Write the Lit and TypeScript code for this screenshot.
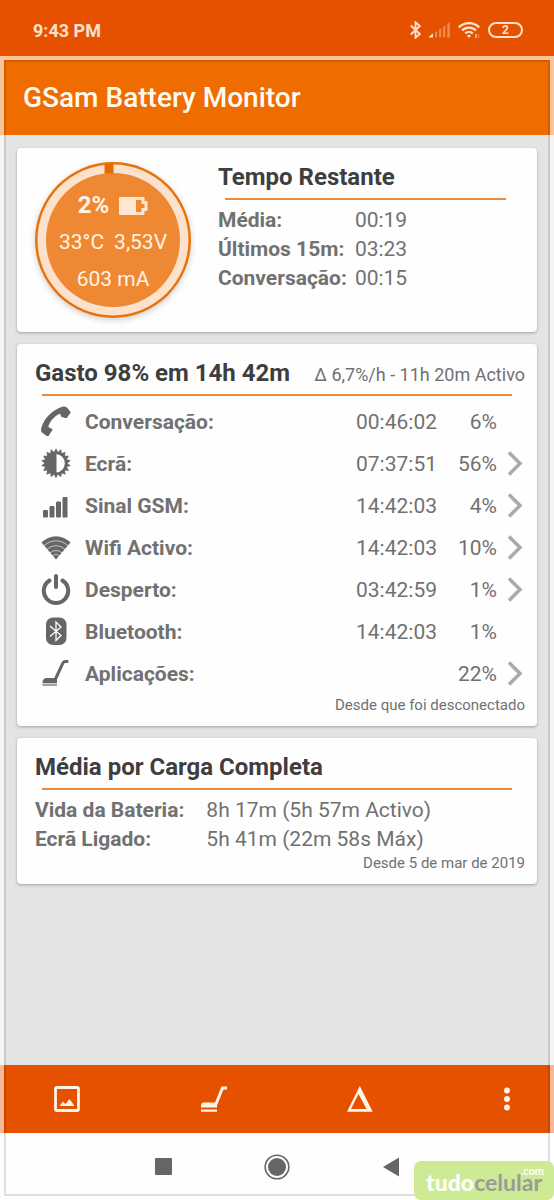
import { LitElement, html, svg, css, nothing } from "lit";
import { customElement, property } from "lit/decorators.js";

const usageIcons: Record<string, unknown> = {
  phone: svg`<path d="M22 .6Q25 0 26.500 2L29.800 6.500 25.500 12.300 20.500 11 19 7.800C14 9.500 8.500 15.500 7.300 20.800L11.800 23.500 7.500 30 5.500 30 .8 26.300Q-.3 25 .3 22C3 12.500 11 4 22 .6Z"/>`,
  screen: svg`<path fill-rule="evenodd" d="${burst()}M15.500 6v18.500a9.300 9.300 0 0 0 0-18.500Z"/>`,
  signal: svg`<rect x="2" y="20" width="5" height="7.500" rx="1"/><rect x="8.500" y="16" width="5" height="11.500" rx="1"/><rect x="15" y="11.500" width="5" height="16" rx="1"/><rect x="21.500" y="7" width="5" height="20.500" rx="1"/>`,
  wifi: svg`<path d="M.500 10.500A20 20 0 0 1 29.500 10.500L15 27.500Z"/><g fill="none" stroke="#fff" stroke-width=".8" opacity=".8"><path d="M3 13.800a17 17 0 0 1 24 0M6 17.300a13 13 0 0 1 18 0M9 20.800a9 9 0 0 1 12 0M11.500 24a5 5 0 0 1 7 0"/></g>`,
  power: svg`<g fill="none" stroke="currentColor" stroke-width="4" stroke-linecap="round"><path d="M8.500 6.500a12.200 12.200 0 1 0 13 0"/><path d="M15 2v11"/></g>`,
  bluetooth: svg`<rect x="5" y="1.500" width="20.500" height="27.500" rx="7"/><path d="m9 10 11 9.500-5 5V6l5 5-11 9.500" fill="none" stroke="#fff" stroke-width="1.300"/>`,
  apps: svg`<path d="M27.300 3.500H24q-1.500 0-2.300 2L14 22" fill="none" stroke="currentColor" stroke-width="3"/><path d="M1.500 25c0-4 2-5 5-5h9.500v5Z"/><path d="M1.500 25.500h14.500v2.500h-14.500Z" opacity=".6"/>`,
};

function burst(): string {
  const teeth = 18;
  let path = "";
  for (let i = 0; i < teeth * 2; i++) {
    const radius = i % 2 ? 11.5 : 15;
    const angle = (Math.PI * i) / teeth;
    const x = (15 + radius * Math.sin(angle)).toFixed(1);
    const y = (15.2 - radius * Math.cos(angle)).toFixed(1);
    path += `${i ? "L" : "M"}${x} ${y}`;
  }
  return path + "Z";
}

interface Usage {
  icon: string;
  label: string;
  time: string;
  share: string;
  details: boolean;
}

const usage: Usage[] = [
  { icon: "phone", label: "Conversação:", time: "00:46:02", share: "6%", details: false },
  { icon: "screen", label: "Ecrã:", time: "07:37:51", share: "56%", details: true },
  { icon: "signal", label: "Sinal GSM:", time: "14:42:03", share: "4%", details: true },
  { icon: "wifi", label: "Wifi Activo:", time: "14:42:03", share: "10%", details: true },
  { icon: "power", label: "Desperto:", time: "03:42:59", share: "1%", details: true },
  { icon: "bluetooth", label: "Bluetooth:", time: "14:42:03", share: "1%", details: false },
  { icon: "apps", label: "Aplicações:", time: "", share: "22%", details: true },
];

@customElement("status-bar")
export class StatusBar extends LitElement {
  static styles = css`
    :host {
      display: flex;
      align-items: center;
      justify-content: space-between;
      box-sizing: border-box;
      height: 56px;
      padding: 4px 31px 0 33px;
      background: #e65100;
      color: #fce0cf;
      font-size: 18px;
      font-weight: 700;
    }
    .icons {
      display: flex;
      align-items: center;
      gap: 8px;
    }
    svg {
      display: block;
    }
    .battery {
      box-sizing: border-box;
      width: 35px;
      height: 16px;
      border: 2px solid currentColor;
      border-radius: 8px;
      font-size: 12px;
      font-weight: 700;
      line-height: 12px;
      text-align: center;
    }
  `;
  render() {
    return html`
      <span>9:43 PM</span>
      <span class="icons">
        <svg width="11" height="18" viewBox="0 0 11 18" fill="none" stroke="currentColor" stroke-width="1.900">
          <path d="m.800 4.500 9 8.500-4.300 3.700V1.300L9.800 5l-9 8.500" />
        </svg>
        <svg width="21" height="16" viewBox="0 0 21 16" fill="currentColor">
          <path d="M0 15.500 0 14.500 4 11.500v4Z" />
          <g opacity=".4">
            <path d="M6 10.500l2-1.500v6.500H6ZM10 7.500 12.200 6v9.500H10ZM14 5l2.300-1.500v12H14ZM18.300 2 20.800 0v15.500h-2.500Z" />
          </g>
        </svg>
        <svg width="22" height="18" viewBox="0 0 22 18" fill="none" stroke="currentColor" stroke-width="2.400">
          <path d="M.800 6.300a14.500 14.500 0 0 1 20.400 0M4 9.500a10 10 0 0 1 14 0M7.200 12.500a5.500 5.500 0 0 1 7.600 0" />
          <path d="m11 17-2-2.300a3 3 0 0 1 4 0Z" fill="currentColor" stroke="none" />
          <path d="M18 13v4" stroke-width="1.200" />
          <path d="M20.500 13v4" stroke-width="1.200" opacity=".4" />
        </svg>
        <span class="battery">2</span>
      </span>
    `;
  }
}

@customElement("info-card")
export class InfoCard extends LitElement {
  @property() heading = "";
  @property() note = "";
  @property() footer = "";
  static styles = css`
    :host {
      display: block;
      min-width: 0;
    }
    header {
      display: flex;
      align-items: baseline;
      justify-content: space-between;
      white-space: nowrap;
    }
    h2 {
      margin: 0;
      color: #3e3e3e;
      font-size: 24px;
      font-weight: 700;
      line-height: 30px;
    }
    .note {
      font-size: 18px;
      line-height: 24px;
    }
    .rule {
      height: 2px;
      margin: 6px 13px 5px 7px;
      background: #e98a3c;
    }
    .footer {
      margin: 0;
      font-size: 15px;
      line-height: 21px;
      text-align: right;
    }
  `;
  render() {
    return html`
      <header>
        <h2>${this.heading}</h2>
        ${this.note ? html`<span class="note">${this.note}</span>` : nothing}
      </header>
      <div class="rule"></div>
      <slot></slot>
      ${this.footer ? html`<p class="footer">${this.footer}</p>` : nothing}
    `;
  }
}

@customElement("battery-dial")
export class BatteryDial extends LitElement {
  static styles = css`
    :host {
      display: grid;
      flex: none;
      width: 156px;
      height: 156px;
      border-radius: 50%;
      box-shadow: 0 2px 6px rgba(0, 0, 0, 0.2);
      color: #fff4e6;
      font-size: 21px;
    }
    .ring,
    .readings {
      grid-area: 1 / 1;
    }
    .readings {
      display: flex;
      flex-direction: column;
      align-items: center;
      padding-top: 25px;
      line-height: 37px;
    }
    .line {
      display: flex;
      align-items: center;
      gap: 10px;
    }
    .line b {
      font-size: 24px;
    }
  `;
  render() {
    return html`
      <svg class="ring" width="156" height="156" viewBox="0 0 156 156">
        <circle cx="78" cy="78" r="78" fill="#e8710a" />
        <circle cx="78" cy="78" r="75.500" fill="#fce2cd" />
        <circle cx="78" cy="78" r="67" fill="#ef8832" />
        <path d="M69.500 2h9v9.500h-9Z" fill="#e66a00" />
      </svg>
      <div class="readings">
        <div class="line">
          <b>2%</b>
          <svg width="29" height="18" viewBox="0 0 29 18" fill="#ffe6d0">
            <path fill-rule="evenodd" d="M1 0h23.500q1 0 1 1v3h2q1 0 1 1v8q0 1-1 1h-2v3q0 1-1 1H1q-1 0-1-1V1q0-1 1-1ZM17 3v12h5.500v-4h3V7h-3V3Z" />
          </svg>
        </div>
        <div class="line"><span>33°C</span><span>3,53V</span></div>
        <div>603 mA</div>
      </div>
    `;
  }
}

@customElement("app-root")
export class AppRoot extends LitElement {
  static styles = css`
    :host {
      position: relative;
      display: flex;
      flex-direction: column;
      min-height: 100vh;
      background: #e4e4e4;
      color: #717171;
      font: 400 21px Roboto, sans-serif;
    }
    .frame {
      position: absolute;
      inset: 56px 0 0;
      border: 4px solid rgba(255, 255, 255, 0.6);
      box-shadow: inset 0 0 0 2px rgba(0, 0, 0, 0.12);
      pointer-events: none;
    }
    .title {
      box-sizing: border-box;
      height: 79px;
      padding: 4px 23px 0;
      background: #ef6c00;
      color: #fffaf0;
    }
    h1 {
      margin: 0;
      font-size: 28px;
      font-weight: 500;
      line-height: 75px;
    }
    main {
      flex: 1;
      display: flex;
      flex-direction: column;
      gap: 12px;
      padding: 13px 17px;
    }
    .card {
      padding: 14px 12px 10px 18px;
      border-radius: 4px;
      background: #fefefe;
      box-shadow: 0 1px 3px rgba(0, 0, 0, 0.3);
    }
    .summary {
      display: flex;
      gap: 27px;
      padding: 14px 18px;
    }
    .remaining {
      flex: 1;
    }
    dl {
      display: grid;
      grid-template-columns: max-content 1fr;
      column-gap: 8px;
      margin: 0;
      padding-top: 1px;
      line-height: 29px;
    }
    .average {
      column-gap: 22px;
      margin-bottom: -1px;
    }
    dt {
      font-weight: 700;
    }
    dd {
      margin: 0;
    }
    table {
      width: 100%;
      border-collapse: collapse;
      table-layout: fixed;
    }
    tr {
      height: 42px;
    }
    th,
    td {
      padding: 0;
      text-align: right;
    }
    th {
      font-weight: 700;
      text-align: left;
    }
    .icon-col {
      width: 50px;
    }
    .share-col {
      width: 60px;
    }
    .more-col {
      width: 28px;
    }
    .glyph {
      display: block;
      margin: 0 0 2px 6px;
      color: #666;
    }
    button {
      display: grid;
      place-items: center;
      padding: 0;
      border: 0;
      background: none;
      color: inherit;
    }
    .more {
      width: 28px;
      height: 40px;
      padding-left: 8px;
      color: #aaa;
    }
    .tools {
      display: flex;
      align-items: center;
      justify-content: space-between;
      height: 68px;
      padding: 0 23px 0 43px;
      background: #e65100;
      color: #fff4e8;
    }
    .system {
      display: flex;
      align-items: center;
      justify-content: center;
      gap: 66px;
      height: 67px;
      background: #fefefe;
      color: #666;
    }
    .tools button,
    .system button {
      width: 48px;
      height: 48px;
    }
    .mark {
      position: absolute;
      right: 0;
      bottom: 0;
      box-sizing: border-box;
      width: 140px;
      height: 39px;
      border-radius: 7px;
      background: #cdea94;
      color: #9b9b9b;
      font: 700 23px/42px Lato, sans-serif;
      text-align: center;
    }
    .mark b {
      color: #fff;
    }
    .com {
      position: absolute;
      top: 4px;
      right: 10px;
      color: #fff;
      font-size: 11px;
      line-height: 12px;
    }
  `;

  private usageRow(item: Usage) {
    return html`
      <tr>
        <td><svg class="glyph" width="30" height="31" viewBox="0 0 30 31" fill="currentColor">${usageIcons[item.icon]}</svg></td>
        <th scope="row">${item.label}</th>
        <td>${item.time}</td>
        <td>${item.share}</td>
        <td>
          ${item.details
            ? html`<button class="more" aria-label=${item.label}>
                <svg width="16" height="26" viewBox="0 0 16 26" fill="none" stroke="currentColor" stroke-width="3.500">
                  <path d="M2 1.500 13 12.500 2 23.500" />
                </svg>
              </button>`
            : nothing}
        </td>
      </tr>
    `;
  }

  render() {
    return html`
      <status-bar></status-bar>
      <div class="title"><h1>GSam Battery Monitor</h1></div>
      <main>
        <section class="card summary">
          <battery-dial></battery-dial>
          <info-card class="remaining" heading="Tempo Restante">
            <dl>
              <dt>Média:</dt>
              <dd>00:19</dd>
              <dt>Últimos 15m:</dt>
              <dd>03:23</dd>
              <dt>Conversação:</dt>
              <dd>00:15</dd>
            </dl>
          </info-card>
        </section>
        <section class="card">
          <info-card heading="Gasto 98% em 14h 42m" note="Δ 6,7%/h - 11h 20m Activo" footer="Desde que foi desconectado">
            <table>
              <colgroup>
                <col class="icon-col" />
                <col />
                <col />
                <col class="share-col" />
                <col class="more-col" />
              </colgroup>
              <tbody>
                ${usage.map((item) => this.usageRow(item))}
              </tbody>
            </table>
          </info-card>
        </section>
        <section class="card">
          <info-card heading="Média por Carga Completa" footer="Desde 5 de mar de 2019">
            <dl class="average">
              <dt>Vida da Bateria:</dt>
              <dd>8h 17m (5h 57m Activo)</dd>
              <dt>Ecrã Ligado:</dt>
              <dd>5h 41m (22m 58s Máx)</dd>
            </dl>
          </info-card>
        </section>
      </main>
      <nav class="tools">
        <button aria-label="Gráficos">
          <svg width="26" height="26" viewBox="0 0 26 26" fill="currentColor">
            <rect x="1.500" y="1.500" width="23" height="23" rx="1.500" fill="none" stroke="currentColor" stroke-width="2.800" />
            <path d="m5.500 20 3.500-4.500 2.500 2.500 4-5 5 7Z" />
          </svg>
        </button>
        <button aria-label="Aplicações">
          <svg width="26" height="26" viewBox="0 0 26 26" fill="currentColor">
            <path d="M0 21.500v-2q0-3 3-3h11L20.500.500H26v3h-3.500L16 19.500v2ZM0 23.500h16v2.200H0Z" />
          </svg>
        </button>
        <button aria-label="Delta">
          <svg width="26" height="26" viewBox="0 0 26 26" fill="currentColor">
            <path fill-rule="evenodd" d="M12.800 0 25.700 25.700H0ZM11.500 8 4 23h15.500Z" />
          </svg>
        </button>
        <button aria-label="Mais opções">
          <svg width="8" height="26" viewBox="0 0 8 26" fill="currentColor">
            <circle cx="4" cy="4.500" r="3" /><circle cx="4" cy="13" r="3" /><circle cx="4" cy="21.500" r="3" />
          </svg>
        </button>
      </nav>
      <nav class="system">
        <button aria-label="Recentes">
          <svg width="17" height="17" fill="currentColor"><rect width="17" height="17" rx="1" /></svg>
        </button>
        <button aria-label="Início">
          <svg width="26" height="26" viewBox="0 0 26 26" fill="currentColor">
            <circle cx="13" cy="13" r="11.800" fill="none" stroke="currentColor" stroke-width="1.600" /><circle cx="13" cy="13" r="9" />
          </svg>
        </button>
        <button aria-label="Voltar">
          <svg width="16" height="20" fill="currentColor"><path d="M16 .500v19L0 10Z" /></svg>
        </button>
      </nav>
      <div class="frame"></div>
      <div class="mark"><b>tudo</b>celular<span class="com">.com</span></div>
    `;
  }
}
